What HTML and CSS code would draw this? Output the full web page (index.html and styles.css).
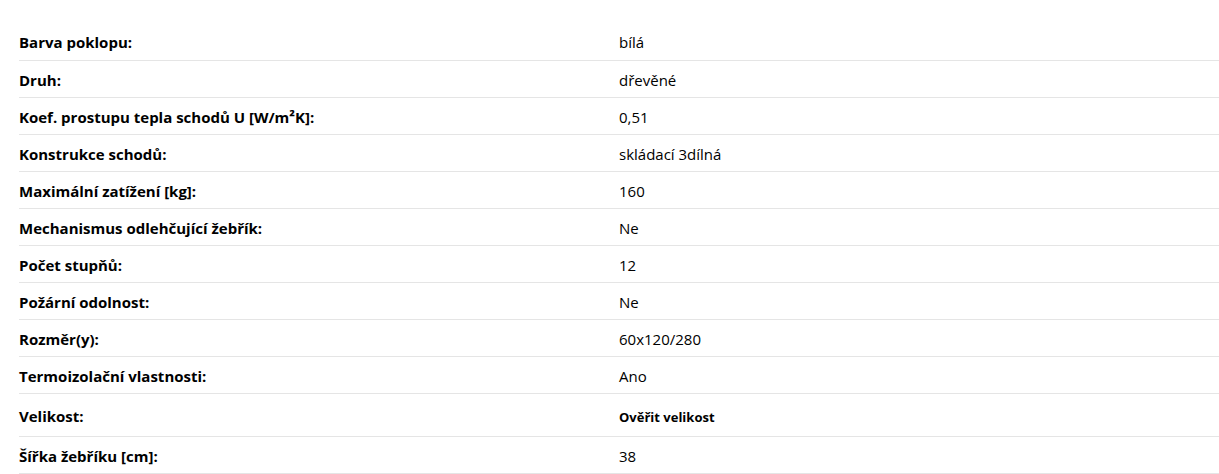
FILE: index.html
```html
<!DOCTYPE html>
<html lang="cs">
<head>
  <meta charset="UTF-8">
  <meta name="viewport" content="width=device-width, initial-scale=1.0">
  <title>Parametry</title>
  <link rel="stylesheet" href="styles.css">
</head>
<body>
  <div class="params">
    <table class="params-table">
      <tr><th>Barva poklopu:</th><td>bílá</td></tr>
      <tr><th>Druh:</th><td>dřevěné</td></tr>
      <tr><th>Koef. prostupu tepla schodů U [W/m²K]:</th><td>0,51</td></tr>
      <tr><th>Konstrukce schodů:</th><td>skládací 3dílná</td></tr>
      <tr><th>Maximální zatížení [kg]:</th><td>160</td></tr>
      <tr><th>Mechanismus odlehčující žebřík:</th><td>Ne</td></tr>
      <tr><th>Počet stupňů:</th><td>12</td></tr>
      <tr><th>Požární odolnost:</th><td>Ne</td></tr>
      <tr><th>Rozměr(y):</th><td>60x120/280</td></tr>
      <tr><th>Termoizolační vlastnosti:</th><td>Ano</td></tr>
      <tr class="size-row"><th>Velikost:</th><td><a class="size-link" href="#">Ověřit velikost</a></td></tr>
      <tr><th>Šířka žebříku [cm]:</th><td>38</td></tr>
    </table>
  </div>
</body>
</html>
```

FILE: styles.css
```css
* {
  margin: 0;
  padding: 0;
  box-sizing: border-box;
}

body {
  font-family: "Open Sans", "Noto Sans", sans-serif;
  background-color: #fff;
  color: #000;
}

.params {
  padding: 23px 0 0 19px;
}

.params-table {
  width: 1200px;
  border-collapse: collapse;
  table-layout: fixed;
}

.params-table th,
.params-table td {
  width: 50%;
  height: 37px;
  padding-top: 2px;
  text-align: left;
  vertical-align: middle;
  font-size: 15px;
  border-bottom: 1px solid #e5e5e5;
}

.params-table th {
  font-weight: 700;
}

.params-table td {
  font-weight: 400;
}

.size-row th,
.size-row td {
  height: 43px;
}

.size-link {
  color: #000;
  font-size: 13px;
  font-weight: 700;
  text-decoration: none;
}
```
